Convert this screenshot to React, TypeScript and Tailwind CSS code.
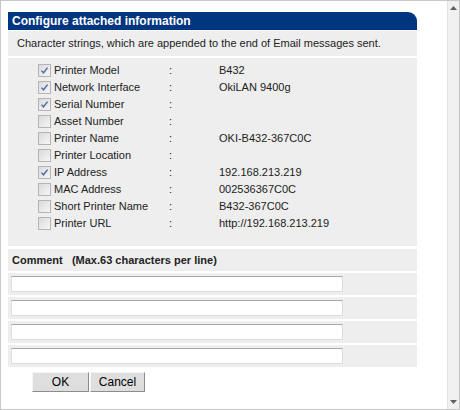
import * as React from "react";

type Item = { label: string; checked: boolean; value: string };

const items: Item[] = [
  { label: "Printer Model", checked: true, value: "B432" },
  { label: "Network Interface", checked: true, value: "OkiLAN 9400g" },
  { label: "Serial Number", checked: true, value: "" },
  { label: "Asset Number", checked: false, value: "" },
  { label: "Printer Name", checked: false, value: "OKI-B432-367C0C" },
  { label: "Printer Location", checked: false, value: "" },
  { label: "IP Address", checked: true, value: "192.168.213.219" },
  { label: "MAC Address", checked: false, value: "002536367C0C" },
  { label: "Short Printer Name", checked: false, value: "B432-367C0C" },
  { label: "Printer URL", checked: false, value: "http://192.168.213.219" },
];

function Check({ checked }: { checked: boolean }) {
  return (
    <span className="flex h-[13px] w-[13px] shrink-0 items-center justify-center border border-[#b4b4b4] bg-gradient-to-br from-[#dadada] to-[#f6f6f6]">
      {checked && (
        <svg width="9" height="9" viewBox="0 0 9 9" aria-hidden>
          <path d="M1.5 4.6 L3.5 6.8 L7.6 1.6" fill="none" stroke="#4b6ea8" strokeWidth="1.4" />
        </svg>
      )}
    </span>
  );
}

export default function App() {
  const [values, setValues] = React.useState(items.map((i) => i.checked));

  return (
    <div className="flex h-[410px] w-[460px] border border-[#c6c6c6] bg-white font-['Liberation_Sans',Arial,sans-serif] text-[11px] text-[#222]">
      <div className="flex-1 pl-[7px] pt-[11px]">
        <div className="w-[409px]">
          <div className="flex h-[18px] items-center rounded-tr-[9px] bg-[#003580] pl-1 text-[12px] font-bold text-white">
            Configure attached information
          </div>
          <div className="mt-px flex h-[25px] items-center bg-[#eeeeee] pl-[9px]">
            Character strings, which are appended to the end of Email messages sent.
          </div>
          <div className="mt-[2px] bg-[#eeeeee] pb-[14px] pt-[4px]">
            {items.map((it, i) => (
              <label key={it.label} className="flex h-[17px] items-center" onClick={() => setValues((v) => v.map((x, j) => (j === i ? !x : x)))}>
                <span className="w-[30px]" />
                <Check checked={values[i]} />
                <span className="ml-[3px] w-[115px]">{it.label}</span>
                <span className="w-[50px]">:</span>
                <span>{it.value}</span>
              </label>
            ))}
          </div>
          <div className="mt-[3px] flex h-[22px] items-center bg-[#eeeeee] pl-1 font-bold">
            Comment&nbsp;&nbsp;&nbsp;(Max.63 characters per line)
          </div>
          <div className="mt-[2px] flex flex-col gap-[2px]">
            {[0, 1, 2, 3].map((n) => (
              <div key={n} className="flex h-[22px] items-center bg-[#eeeeee] pl-[3px]">
                <input
                  type="text"
                  className="h-[16px] w-[332px] border border-[#dcdde2] border-t-[#a9a9a9] bg-white outline-none"
                />
              </div>
            ))}
          </div>
          <div className="mt-[5px] flex pl-[24px]">
            <button className="h-[20px] w-[57px] border border-[#f4f4f4] border-b-[#8c8c8c] border-r-[#8c8c8c] bg-[#dedede] text-[12px] text-black">
              OK
            </button>
            <button className="ml-px h-[20px] w-[55px] border border-[#f4f4f4] border-b-[#8c8c8c] border-r-[#8c8c8c] bg-[#dedede] text-[12px] text-black">
              Cancel
            </button>
          </div>
        </div>
      </div>
      <div className="flex w-[12px] flex-col items-center justify-between border-l border-[#e2e2e2] bg-[#f0f0f0] py-[5px]">
        <svg width="7" height="4" viewBox="0 0 7 4" aria-hidden>
          <path d="M0 4 L3.5 0 L7 4 Z" fill="#606060" />
        </svg>
        <svg width="7" height="4" viewBox="0 0 7 4" aria-hidden>
          <path d="M0 0 L3.5 4 L7 0 Z" fill="#606060" />
        </svg>
      </div>
    </div>
  );
}
